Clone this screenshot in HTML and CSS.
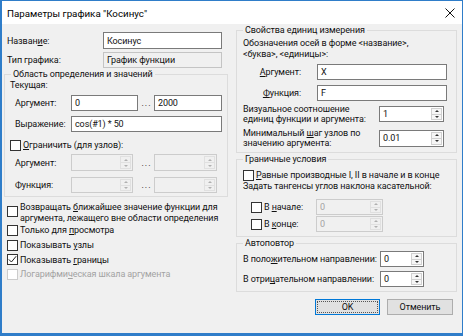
FILE: index.html
```html
<!DOCTYPE html>
<html lang="ru">
<head>
<meta charset="utf-8">
<title>Параметры графика</title>
<link rel="stylesheet" href="styles.css">
</head>
<body>
<div class="window">
  <div class="titlebar">
    <span class="title">Параметры графика "Косинус"</span>
    <svg class="close" width="10" height="10" viewBox="0 0 10 10"><path d="M0.5 0.5 L9.5 9.5 M9.5 0.5 L0.5 9.5" stroke="#111" stroke-width="1" fill="none"/></svg>
  </div>
  <div class="client">
    <div class="col col-left">
      <div class="frow r-name"><span class="flabel">Назван<u>и</u>е:</span><div class="edit w-wide">Косинус</div></div>
      <div class="frow r-type"><span class="flabel">Тип графика:</span><div class="edit w-wide readonly">График функции</div></div>
      <fieldset class="group g-domain">
        <legend>Область определения и значений</legend>
        <div class="gbody gb-domain">
          <div class="sub">Текущая:</div>
          <div class="grow r-arg"><span class="glabel">Аргумент:</span><div class="edit e-a">0</div><span class="dots">...</span><div class="edit e-b">2000</div></div>
          <div class="grow r-expr"><span class="glabel">Выражение:</span><div class="edit e-ab">cos(#1) * 50</div></div>
          <div class="check r-limit"><span class="box"></span><span><u>О</u>граничить (для узлов):</span></div>
          <div class="grow r-s1"><span class="glabel">Аргумент:</span><div class="spin disabled s-a"><span class="val"></span><span class="arrows"><span class="up"></span><span class="down"></span></span></div><span class="dots">...</span><div class="spin disabled s-b"><span class="val"></span><span class="arrows"><span class="up"></span><span class="down"></span></span></div></div>
          <div class="grow r-s2"><span class="glabel">Функция:</span><div class="spin disabled s-a"><span class="val"></span><span class="arrows"><span class="up"></span><span class="down"></span></span></div><span class="dots">...</span><div class="spin disabled s-b"><span class="val"></span><span class="arrows"><span class="up"></span><span class="down"></span></span></div></div>
        </div>
      </fieldset>
      <div class="checks">
        <div class="check c-multi"><span class="box"></span><span>Возвращать <u>б</u>лижайшее значение функции для<br>аргумента, лежащего вне области определения</span></div>
        <div class="check c-row"><span class="box"></span><span>Только для <u>п</u>росмотра</span></div>
        <div class="check c-row"><span class="box"></span><span>Показывать <u>у</u>злы</span></div>
        <div class="check c-row"><span class="box checked"><svg width="9" height="9" viewBox="0 0 9 9"><path d="M0.8 4.4 L3.4 7 L8.2 1.2" stroke="#222" stroke-width="1" fill="none"/></svg></span><span>Показывать <u>г</u>раницы</span></div>
        <div class="check c-row disabled"><span class="box"></span><span>Логарифми<u>ч</u>еская шкала аргумента</span></div>
      </div>
    </div>
    <div class="col col-right">
      <fieldset class="group g-units">
        <legend>Свойства единиц измерения</legend>
        <div class="gbody gb-r gb-units">
          <div class="note">Обозначения осей в форме &lt;название&gt;,<br>&lt;буква&gt;, &lt;единицы&gt;:</div>
          <div class="grow r-uarg"><span class="ulabel"><u>А</u>ргумент:</span><div class="edit e-u">X</div></div>
          <div class="grow r-ufunc"><span class="ulabel"><u>Ф</u>ункция:</span><div class="edit e-u">F</div></div>
          <div class="grow r-vis"><span class="vlabel">Визуальное соотношение<br>единиц функции и аргумента:</span><div class="spin s-v"><span class="val">1</span><span class="arrows"><span class="up"></span><span class="down"></span></span></div></div>
          <div class="grow r-min"><span class="vlabel">Минимальный <u>ш</u>аг узлов по<br>значению аргумента:</span><div class="spin s-v s-tall"><span class="val">0.01</span><span class="arrows"><span class="up"></span><span class="down"></span></span></div></div>
        </div>
      </fieldset>
      <fieldset class="group g-bound">
        <legend>Граничные условия</legend>
        <div class="gbody gb-r gb-bound">
          <div class="check r-eq"><span class="box"></span><span><u>Р</u>авные производные I, II в начале и в конце</span></div>
          <div class="note1">Задать тангенсы углов наклона касательной:</div>
          <div class="grow r-tan r-tan1"><div class="check tcheck"><span class="box"></span><span>В <u>н</u>ачале:</span></div><div class="spin disabled s-t"><span class="val">0</span><span class="arrows"><span class="up"></span><span class="down"></span></span></div></div>
          <div class="grow r-tan r-tan2"><div class="check tcheck"><span class="box"></span><span>В <u>к</u>онце:</span></div><div class="spin disabled s-t"><span class="val">0</span><span class="arrows"><span class="up"></span><span class="down"></span></span></div></div>
        </div>
      </fieldset>
      <fieldset class="group g-auto">
        <legend>Автоповтор</legend>
        <div class="gbody gb-r gb-auto">
          <div class="grow r-auto1"><span class="alabel">В поло<u>ж</u>ительном направлении:</span><div class="spin s-au"><span class="val">0</span><span class="arrows"><span class="up"></span><span class="down"></span></span></div></div>
          <div class="grow r-auto2"><span class="alabel">В отри<u>ц</u>ательном направлении:</span><div class="spin s-au"><span class="val">0</span><span class="arrows"><span class="up"></span><span class="down"></span></span></div></div>
        </div>
      </fieldset>
      <div class="buttons">
        <div class="btn btn-default"><span class="focus">OK</span></div>
        <div class="btn btn-cancel">Отменить</div>
      </div>
    </div>
  </div>
</div>
</body>
</html>
```

FILE: styles.css
```css
* { box-sizing: border-box; }
html, body { margin: 0; padding: 0; }
body {
  width: 463px; height: 336px; overflow: hidden;
  font-family: Roboto, "Liberation Sans", sans-serif;
  font-size: 9px; letter-spacing: -0.1px; color: #111; background: #fff;
}
u { text-decoration: underline; text-underline-offset: 1px; text-decoration-thickness: 1px; }

.window {
  width: 463px; height: 336px;
  border: 1px solid #2f7dc9; border-left-width: 2px; border-bottom-width: 3px;
  display: flex; flex-direction: column;
}
.titlebar {
  height: 23px; flex: none; background: #fff;
  display: flex; align-items: center; justify-content: space-between;
  padding: 1px 7px 0 5px;
}
.title { font-size: 9.75px; letter-spacing: 0; color: #000; }
.close { display: block; }

.client {
  flex: 1; background: #f0f0f0;
  display: flex; gap: 8px;
  padding: 0 5px 0 2px;
  white-space: nowrap;
}
.col { display: flex; flex-direction: column; }
.col-left { width: 224px; }
.col-right { width: 221px; }

.frow, .grow { display: flex; align-items: center; white-space: nowrap; }
.r-name { margin-top: 8px; height: 17px; }
.r-type { margin-top: 3px; height: 16px; }
.flabel { width: 99px; padding-left: 3px; }

.edit {
  height: 16px; border: 1px solid #7a7a7a; background: #fff;
  padding-left: 3px; display: flex; align-items: center; white-space: nowrap;
}
.r-name .edit { height: 17px; }
.w-wide { width: 119px; }
.edit.readonly { background: #f0f0f0; border-color: #c4c4c4; }

fieldset.group {
  margin: 0; padding: 0; min-width: 0;
  border: 1px solid #dcdcdc;
}
legend {
  padding: 0 2px; margin-left: 6px;
  line-height: 12px; height: 12px;
}
.gbody { display: flex; flex-direction: column; }

/* left group */
.g-domain { margin-top: 6px; }
.gb-domain { padding: 0 0 3px 5px; }
.sub { line-height: 11px; height: 11px; }
.r-arg { margin-top: 4px; height: 16px; }
.r-expr { margin-top: 5px; height: 16px; }
.r-limit { margin-top: 7px; height: 12px; }
.r-s1 { margin-top: 3px; height: 17px; }
.r-s2 { margin-top: 6px; height: 16px; }
.glabel { width: 61px; padding-left: 5px; }
.e-a { width: 67px; }
.e-b { width: 68px; }
.e-ab { width: 151px; }
.dots { width: 16px; text-align: center; letter-spacing: 1px; padding-left: 1px; }
.s-a { width: 62px; margin-right: 5px; }
.s-b { width: 63px; }
.r-s1 .spin { height: 17px; }

/* checkboxes */
.check { display: flex; align-items: center; white-space: nowrap; }
.box {
  width: 11px; height: 11px; flex: none;
  border: 1px solid #333; background: #fff; margin-right: 2px;
  display: flex; align-items: center; justify-content: center;
}
.check.disabled { color: #a3a3a3; }
.check.disabled .box { border-color: #cccccc; }

.checks { display: flex; flex-direction: column; padding-left: 3px; margin-top: 5px; }
.c-multi { align-items: flex-start; line-height: 10.5px; height: 22px; margin-bottom: -1px; }
.c-multi .box { margin-top: 4px; }
.c-row { height: 14.7px; }

/* spin boxes */
.spin {
  height: 16px; border: 1px solid #7a7a7a; background: #fff;
  display: flex; align-items: stretch;
}
.spin .val { flex: 1; padding-left: 3px; display: flex; align-items: center; }
.spin .arrows {
  width: 12px; flex: none; display: flex; flex-direction: column;
  padding: 1px 1px 1px 0;
}
.spin .arrows span {
  flex: 1; display: flex; align-items: center; justify-content: center;
  border: 1px solid #d0d0d0; background: #f6f6f6;
}
.spin .arrows .up { border-bottom-width: 0; }
.spin .up::after {
  content: ""; border-left: 2.5px solid transparent; border-right: 2.5px solid transparent;
  border-bottom: 2.5px solid #333;
}
.spin .down::after {
  content: ""; border-left: 2.5px solid transparent; border-right: 2.5px solid transparent;
  border-top: 2.5px solid #333;
}
.spin.disabled { border-color: #cccccc; background: #f0f0f0; color: #a3a3a3; }
.spin.disabled .arrows span { background: #f0f0f0; border-color: #e0e0e0; }
.spin.disabled .up::after { border-bottom-color: #b0b0b0; }
.spin.disabled .down::after { border-top-color: #b0b0b0; }

/* right groups */
.gb-r { padding-left: 6px; }
.g-units { margin-top: 3px; }
.gb-units { padding-top: 2px; padding-bottom: 3px; }
.note { line-height: 10.5px; }
.r-uarg { margin-top: 5px; height: 16px; }
.r-ufunc { margin-top: 5px; height: 16px; }
.ulabel { width: 74px; text-align: right; padding-right: 16px; }
.e-u { width: 130px; }
.r-vis { margin-top: 2px; height: 22px; }
.r-min { margin-top: 2px; height: 22px; }
.vlabel { width: 136px; line-height: 10.5px; }
.s-v { width: 65px; }
.s-tall { height: 17px; }

.g-bound { margin-top: 5px; }
.gb-bound { padding-top: 4px; padding-bottom: 4px; }
.r-eq { height: 12px; }
.note1 { line-height: 11px; }
.r-tan { height: 16px; }
.r-tan1 { margin-top: 7px; }
.r-tan2 { margin-top: 1px; }
.tcheck { width: 73px; padding-left: 8px; }
.s-t { width: 67px; }

.g-auto { margin-top: 4px; }
.gb-auto { padding-top: 2px; padding-bottom: 4px; }
.r-auto1 { height: 16px; }
.r-auto2 { height: 16px; margin-top: 4px; }
.alabel { width: 137px; }
.s-au { width: 44px; }

/* buttons */
.buttons {
  display: flex; justify-content: flex-end; gap: 7px;
  margin-top: 7px; padding-right: 4px;
}
.btn {
  height: 16px; border: 1px solid #adadad; background: #e1e1e1;
  display: flex; align-items: center; justify-content: center;
}
.btn-cancel { width: 66px; }
.btn-default { width: 65px; border-color: #0078d7; padding: 1px; }
.btn-default .focus {
  width: 100%; height: 100%; border: 1px dotted #555;
  display: flex; align-items: center; justify-content: center;
}
```
